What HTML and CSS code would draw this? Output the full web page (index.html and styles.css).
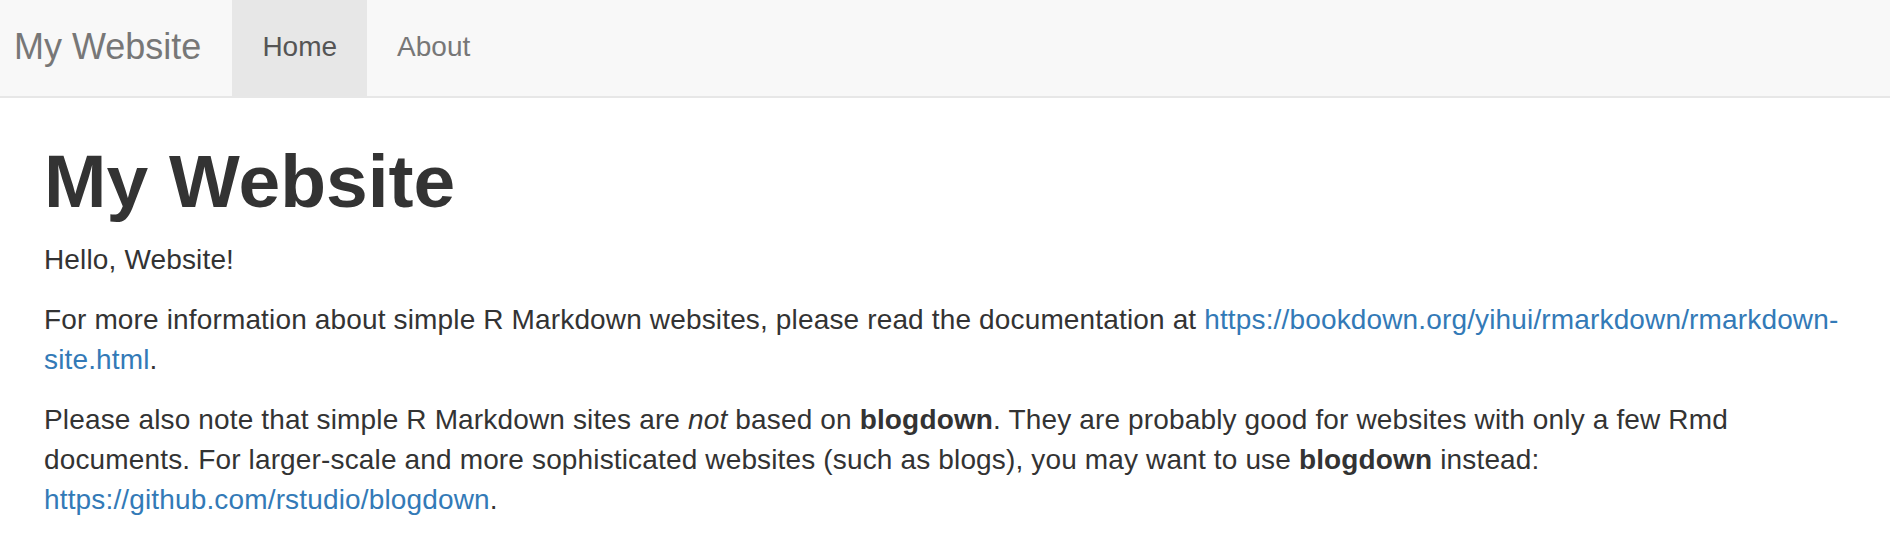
FILE: index.html
```html
<!DOCTYPE html>
<html lang="en">
<head>
<meta charset="utf-8">
<title>My Website</title>
<link rel="stylesheet" href="styles.css">
</head>
<body>
<nav class="navbar">
  <a class="brand" href="#">My Website</a>
  <ul class="nav">
    <li class="nav-item active"><a href="#">Home</a></li>
    <li class="nav-item"><a href="#">About</a></li>
  </ul>
</nav>
<main class="content">
  <h1 class="title">My Website</h1>
  <p>Hello, Website!</p>
  <p>For more information about simple R Markdown websites, please read the documentation at <a href="#">https://bookdown.org/yihui/rmarkdown/rmarkdown-site.html</a>.</p>
  <p>Please also note that simple R Markdown sites are <em>not</em> based on <strong>blogdown</strong>. They are probably good for websites with only a few Rmd documents. For larger-scale and more sophisticated websites (such as blogs), you may want to use <strong>blogdown</strong> instead: <a href="#">https://github.com/rstudio/blogdown</a>.</p>
</main>
</body>
</html>
```
FILE: styles.css
```css
html, body {
  margin: 0;
  padding: 0;
  background: #fff;
}
body {
  font-family: "Liberation Sans", Arial, Helvetica, sans-serif;
  color: #333;
  font-size: 28px;
  line-height: 40px;
}
.navbar {
  display: flex;
  align-items: stretch;
  height: 96px;
  background: #f8f8f8;
  border-bottom: 2px solid #e7e7e7;
}
.brand {
  display: flex;
  align-items: center;
  padding: 0 31px 2px 14px;
  font-size: 36px;
  color: #777;
  text-decoration: none;
}
.nav {
  display: flex;
  margin: 0;
  padding: 0;
  list-style: none;
}
.nav-item a {
  display: flex;
  align-items: center;
  height: 100%;
  box-sizing: border-box;
  padding: 0 30px 2px;
  font-size: 28px;
  color: #777;
  text-decoration: none;
}
.nav-item.active a {
  background: #e7e7e7;
  color: #555;
}
.content {
  padding: 0 44px;
}
.title {
  font-size: 75px;
  font-weight: bold;
  line-height: 1.1;
  margin: 42px 0 17px;
  color: #333;
}
.content p {
  margin: 0 0 20px;
  letter-spacing: 0.15px;
}
.content a {
  color: #337ab7;
  text-decoration: none;
}
```
